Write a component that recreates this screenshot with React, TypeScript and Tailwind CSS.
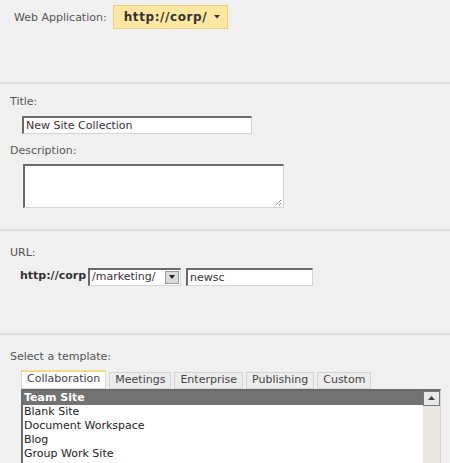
const font = { fontFamily: '"DejaVu Sans", Verdana, sans-serif' };

const templates = ["Team Site", "Blank Site", "Document Workspace", "Blog", "Group Work Site"];
const tabs = ["Collaboration", "Meetings", "Enterprise", "Publishing", "Custom"];

// sunken classic input border: dark top/left, light bottom/right
const sunken = "border-t-2 border-l-2 border-r border-b border-t-[#6a6a6a] border-l-[#6a6a6a] border-r-[#d4d4d4] border-b-[#d4d4d4] bg-white";

export default function App() {
  return (
    <div className="w-[450px] h-[463px] overflow-hidden bg-[#f0f0f0] text-[11px] text-[#555]" style={font}>
      {/* Web application picker */}
      <div className="h-[84px] border-b-2 border-[#dedede] pt-[5px] pl-[14px] flex items-start gap-[6px]">
        <span className="mt-[5px]">Web Application:</span>
        <button className="h-[24px] w-[115px] pl-[10px] flex items-center gap-[7px] bg-[#fde7a1] border border-[#e8cf82] font-bold text-[#333] text-[12px] tracking-[0.6px]">
          http://corp/
          <svg width="6" height="4" viewBox="0 0 6 4"><path d="M0 0 H6 L3 3.5 Z" fill="#333" /></svg>
        </button>
      </div>

      {/* Title + description */}
      <div className="h-[147px] border-b-2 border-[#dedede] pl-[10px] pt-[10px]">
        <div>Title:</div>
        <div className={`ml-[12px] mt-[5px] w-[230px] h-[18px] ${sunken} pl-[2px] leading-[15px] text-[#3a2e3a]`}>
          New Site Collection
        </div>
        <div className="mt-[9px]">Description:</div>
        <div className={`relative ml-[13px] mt-[5px] w-[261px] h-[44px] ${sunken}`}>
          <svg className="absolute right-[1px] bottom-[1px]" width="7" height="7" viewBox="0 0 7 7">
            <path d="M6 1 L1 6 M6 4 L4 6" stroke="#999" strokeWidth="1" />
          </svg>
        </div>
      </div>

      {/* URL */}
      <div className="h-[104px] border-b-2 border-[#dedede] pl-[10px] pt-[14px]">
        <div>URL:</div>
        <div className="mt-[6px] ml-[10px] flex items-center gap-[1px]">
          <span className="font-bold text-[#333] mr-[1px]">http://corp</span>
          <div className={`w-[93px] h-[18px] ${sunken} flex items-center justify-between pl-[2px] pr-[1px] text-[#3a2e3a]`}>
            <span>/marketing/</span>
            <span className="w-[14px] h-[13px] bg-[#dcdcdc] border border-[#999] flex items-center justify-center">
              <svg width="6" height="4" viewBox="0 0 6 4"><path d="M0 0 H6 L3 4 Z" fill="#222" /></svg>
            </span>
          </div>
          <div className={`ml-[4px] w-[127px] h-[18px] ${sunken} pl-[2px] leading-[15px] text-[#3a2e3a]`}>newsc</div>
        </div>
      </div>

      {/* Template selection */}
      <div className="pl-[10px] pt-[14px]">
        <div>Select a template:</div>
        <div className="ml-[11px] mt-[4px] flex items-end gap-[3px] text-[#444]">
          {tabs.map((t, i) => (
            <div
              key={t}
              className={
                i === 0
                  ? "h-[19px] px-[5px] bg-white border border-[#d8d8d8] border-t-2 border-t-[#f3d98a] flex items-center"
                  : "h-[17px] px-[5px] bg-[#ececec] border border-[#d4d4d4] flex items-center"
              }
            >
              {t}
            </div>
          ))}
        </div>
        <div className={`ml-[11px] w-[420px] h-[80px] ${sunken} flex`}>
          <div className="flex-1 text-[#222] leading-[14px]">
            {templates.map((t, i) => (
              <div key={t} className={i === 0 ? "bg-[#727272] text-white font-bold pl-[1px]" : "pl-[1px]"}>
                {t}
              </div>
            ))}
          </div>
          <div className="w-[17px] bg-[#ebe8e2] flex flex-col">
            <div className="h-[15px] bg-[#e8e8e8] border border-[#777] flex items-center justify-center">
              <svg width="7" height="4" viewBox="0 0 7 4"><path d="M0 4 H7 L3.5 0 Z" fill="#444" /></svg>
            </div>
          </div>
        </div>
      </div>
    </div>
  );
}
